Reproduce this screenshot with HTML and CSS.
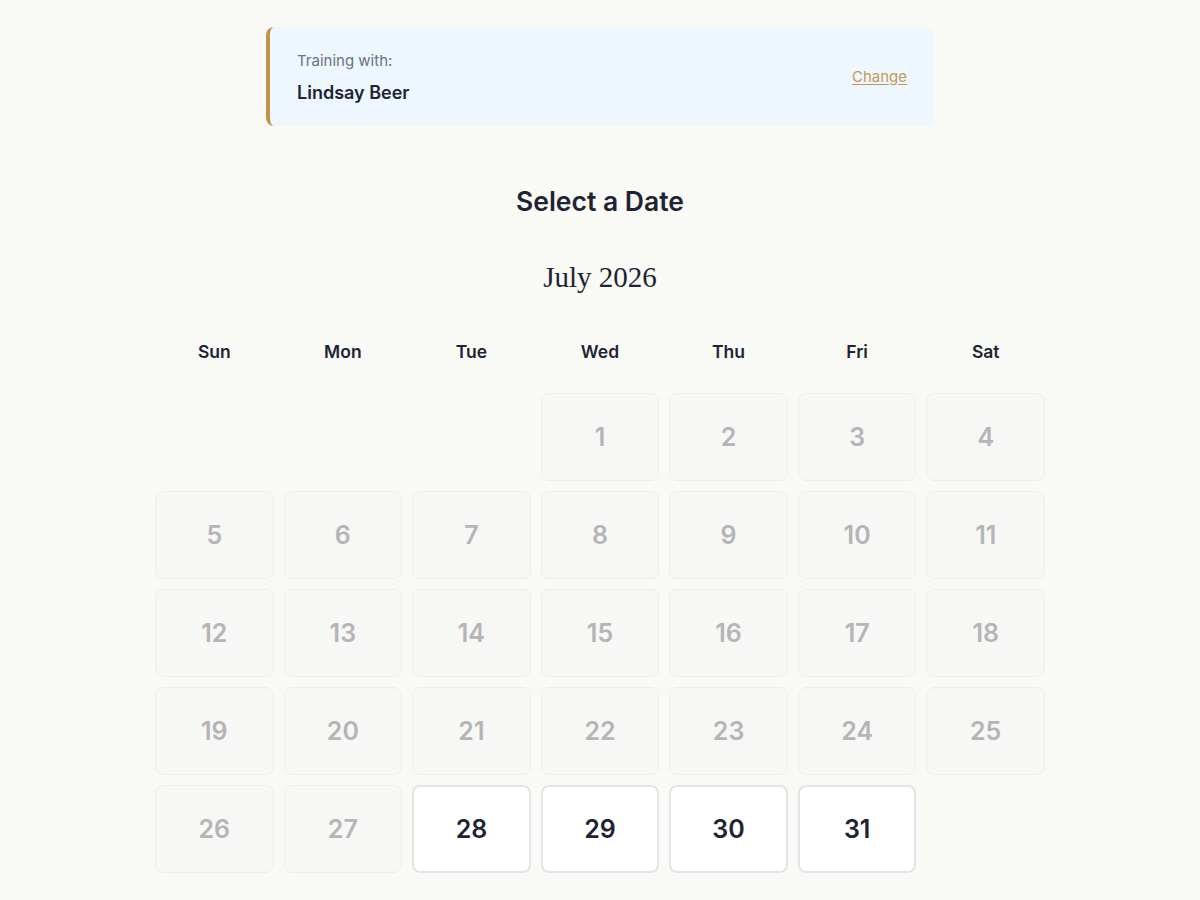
FILE: index.html
```html
<!DOCTYPE html>
<html>
<head>
<meta charset="utf-8">
<link rel="stylesheet" href="styles.css">
</head>
<body>
<main class="page">
  <section class="trainer">
    <div class="trainer-info">
      <div class="trainer-label">Training with:</div>
      <div class="trainer-name">Lindsay Beer</div>
    </div>
    <a class="change" href="#">Change</a>
  </section>
  <h2 class="title">Select a Date</h2>
  <h3 class="month">July 2026</h3>
  <div class="calendar">
    <div class="dow">Sun</div><div class="dow">Mon</div><div class="dow">Tue</div><div class="dow">Wed</div><div class="dow">Thu</div><div class="dow">Fri</div><div class="dow">Sat</div>
    <div class="empty"></div><div class="empty"></div><div class="empty"></div>
    <div class="day off">1</div><div class="day off">2</div><div class="day off">3</div><div class="day off">4</div>
    <div class="day off">5</div><div class="day off">6</div><div class="day off">7</div><div class="day off">8</div><div class="day off">9</div><div class="day off">10</div><div class="day off">11</div>
    <div class="day off">12</div><div class="day off">13</div><div class="day off">14</div><div class="day off">15</div><div class="day off">16</div><div class="day off">17</div><div class="day off">18</div>
    <div class="day off">19</div><div class="day off">20</div><div class="day off">21</div><div class="day off">22</div><div class="day off">23</div><div class="day off">24</div><div class="day off">25</div>
    <div class="day off">26</div><div class="day off">27</div><div class="day on">28</div><div class="day on">29</div><div class="day on">30</div><div class="day on">31</div>
  </div>
</main>
</body>
</html>
```

FILE: styles.css
```css
html, body {
  margin: 0;
  padding: 0;
  background: #f9f9f6;
  font-family: Inter, "Noto Sans", sans-serif;
  color: #1f2433;
}
.page {
  display: flex;
  flex-direction: column;
  align-items: center;
  padding-top: 27px;
}
.trainer {
  width: 668px;
  box-sizing: border-box;
  height: 99px;
  background: #eef6fe;
  border-left: 4px solid #c2944a;
  border-radius: 8px;
  display: flex;
  align-items: center;
  justify-content: space-between;
  padding: 0 27px 0 27px;
}
.trainer-label {
  font-size: 15px;
  color: #6b7280;
  line-height: 20px;
  margin-bottom: 11px;
  margin-top: 1px;
}
.trainer-name {
  font-size: 18px;
  font-weight: 600;
  line-height: 22px;
  color: #1f2433;
}
.change {
  color: #c49a55;
  font-size: 15px;
  text-decoration: underline;
  text-underline-offset: 2px;
}
.title {
  margin: 59px 0 0;
  font-size: 26.5px;
  font-weight: 600;
  line-height: 32px;
  color: #1f2433;
}
.month {
  margin: 42px 0 0;
  font-family: "Liberation Serif", serif;
  font-weight: 400;
  font-size: 29px;
  line-height: 36px;
  color: #1f2433;
  font-variant-numeric: oldstyle-nums;
}
.calendar {
  margin-top: 45px;
  width: 890px;
  display: grid;
  grid-template-columns: repeat(7, 1fr);
  grid-template-rows: 43px;
  grid-auto-rows: 88px;
  column-gap: 10px;
  row-gap: 10px;
}
.dow {
  text-align: center;
  font-size: 17.5px;
  font-weight: 600;
  line-height: 24px;
  color: #1f2433;
}
.day {
  display: flex;
  align-items: center;
  justify-content: center;
  font-size: 25px;
  font-weight: 600;
  border-radius: 8px;
  box-sizing: border-box;
}
.off {
  background: #f7f7f5;
  border: 1.5px solid #eeeeec;
  color: #b5b5b5;
}
.on {
  background: #ffffff;
  border: 2px solid #e3e4e8;
  color: #1f2433;
}
```
